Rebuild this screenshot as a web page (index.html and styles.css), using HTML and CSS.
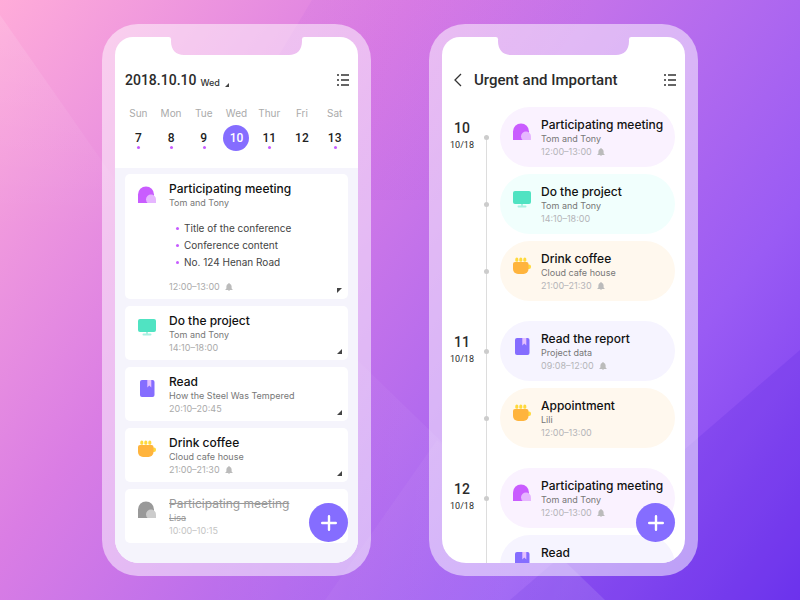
FILE: index.html
```html
<!DOCTYPE html>
<html lang="en">
<head>
<meta charset="utf-8">
<title>Schedule</title>
<link rel="stylesheet" href="styles.css">
</head>
<body>
<svg class="backdrop" viewBox="0 0 800 600" preserveAspectRatio="none" aria-hidden="true">
  <defs>
    <linearGradient id="fade-left" x1="1" y1="0" x2="0" y2="0"><stop offset="0" stop-color="#fff" stop-opacity=".08"/><stop offset="1" stop-color="#fff" stop-opacity="0"/></linearGradient>
    <linearGradient id="fade-down" x1="0" y1="0" x2="0" y2="1"><stop offset="0" stop-color="#fff" stop-opacity=".12"/><stop offset="1" stop-color="#fff" stop-opacity="0"/></linearGradient>
    <linearGradient id="fade-top" x1="0" y1="0" x2="1" y2="0"><stop offset="0" stop-color="#9a3fe0" stop-opacity=".1"/><stop offset="1" stop-color="#9a3fe0" stop-opacity="0"/></linearGradient>
  </defs>
  <path d="M0 15L150 230H0Z" fill="url(#fade-down)"/>
  <path d="M312 0H600L440 200H192Z" fill="url(#fade-top)"/>
  <path d="M800 350L510 600H800Z" fill="#3a0fd8" opacity=".13"/>
  <path d="M355 358L605 600H200Z" fill="url(#fade-left)"/>
  <path d="M437 440L605 600H325Z" fill="#fff" opacity=".04"/>
</svg>

<svg class="sprite" aria-hidden="true">
  <symbol id="meeting" viewBox="0 0 20 20"><path class="tone-a" d="M1 18V9.500a8 8 0 0 1 16 0V18Z"/><path class="tone-b" d="M10.500 18a5 5 0 0 1-1.500-3.500 5 5 0 0 1 10 0V18Z"/></symbol>
  <symbol id="monitor" viewBox="0 0 20 20"><rect x="1" y="2" width="18" height="13" rx="2" fill="#50e3c2"/><path d="M9 15h2v1.500h2.500a1 1 0 0 1 0 2h-7a1 1 0 0 1 0-2H9Z" fill="#a9f1e1"/></symbol>
  <symbol id="book" viewBox="0 0 20 20"><rect x="3" y="2" width="14.500" height="17" rx="2" fill="#856dff"/><path d="M10.300 2h4v7.500l-2-2-2 2Z" fill="#e5c0ff"/></symbol>
  <symbol id="coffee" viewBox="0 0 20 20"><path d="M15 8.500h2a2 2 0 0 1 2 2v.5a2 2 0 0 1-2 2h-2Z" fill="#ffd93b"/><g fill="#ffd93b"><rect x="3.300" y="1.500" width="3" height="4.300" rx="1.500"/><rect x="7.300" y="1.500" width="3" height="4.300" rx="1.500"/><rect x="11.300" y="1.500" width="3" height="4.300" rx="1.500"/></g><path d="M3 6h11.500a2 2 0 0 1 2 2v5a5 5 0 0 1-5 5H6a5 5 0 0 1-5-5V8a2 2 0 0 1 2-2Z" fill="#ffb43d"/></symbol>
  <symbol id="bell" viewBox="0 0 8 8"><path d="M4 0a.7.7 0 0 1 .7.7A2.600 2.600 0 0 1 6.600 3.200V5.500l1 1V7H.4v-.5l1-1V3.200A2.600 2.600 0 0 1 3.300.7.7.7 0 0 1 4 0Z"/><path d="M3 7h2v.6H3Z"/></symbol>
  <symbol id="list" viewBox="0 0 12 12"><path d="M0 1h2M0 6h2M0 11h2M4 1h8M4 6h8M4 11h8" stroke="#333" stroke-width="1.400"/></symbol>
  <symbol id="plus" viewBox="0 0 16 16"><path d="M8 1.200v13.600M1.200 8h13.600" stroke="#fff" stroke-width="2.400" stroke-linecap="round"/></symbol>
  <symbol id="notch" viewBox="0 0 131 18" preserveAspectRatio="none"><path d="M0 0V18H13C5 18 0 13 0 4ZM131 0V18H118C126 18 131 13 131 4Z" fill="#fff"/></symbol>
</svg>

<main class="stage">
  <section class="phone" aria-label="Day view">
    <div class="status"><span class="ear left"></span><svg class="notch"><use href="#notch"/></svg><span class="ear right"></span></div>
    <div class="screen">
      <header class="bar">
        <h1 class="heading numeric">2018.10.10</h1>
        <button class="day-picker">Wed <svg class="corner small" viewBox="0 0 5 5"><path d="M5 0V5H0Z"/></svg></button>
        <button class="menu" aria-label="List"><svg><use href="#list"/></svg></button>
      </header>
      <div class="week">
        <button class="day"><span>Sun</span><b class="dot">7</b></button>
        <button class="day"><span>Mon</span><b class="dot">8</b></button>
        <button class="day"><span>Tue</span><b class="dot">9</b></button>
        <button class="day"><span>Wed</span><b class="today">10</b></button>
        <button class="day"><span>Thur</span><b class="dot">11</b></button>
        <button class="day"><span>Fri</span><b>12</b></button>
        <button class="day"><span>Sat</span><b class="dot">13</b></button>
      </div>
      <div class="agenda">
        <article class="card">
          <svg class="icon"><use href="#meeting"/></svg>
          <div class="info">
            <h2>Participating meeting</h2><p>Tom and Tony</p>
            <ul><li>Title of the conference</li><li>Conference content</li><li>No. 124 Henan Road</li></ul>
            <time>12:00–13:00 <svg class="bell"><use href="#bell"/></svg></time>
          </div>
          <svg class="corner" viewBox="0 0 5 5"><path d="M0 0H5L0 5Z"/></svg>
        </article>
        <article class="card">
          <svg class="icon"><use href="#monitor"/></svg>
          <div class="info"><h2>Do the project</h2><p>Tom and Tony</p><time>14:10–18:00</time></div>
          <svg class="corner" viewBox="0 0 5 5"><path d="M5 0V5H0Z"/></svg>
        </article>
        <article class="card">
          <svg class="icon"><use href="#book"/></svg>
          <div class="info"><h2>Read</h2><p>How the Steel Was Tempered</p><time>20:10–20:45</time></div>
          <svg class="corner" viewBox="0 0 5 5"><path d="M5 0V5H0Z"/></svg>
        </article>
        <article class="card">
          <svg class="icon"><use href="#coffee"/></svg>
          <div class="info"><h2>Drink coffee</h2><p>Cloud cafe house</p><time>21:00–21:30 <svg class="bell"><use href="#bell"/></svg></time></div>
          <svg class="corner" viewBox="0 0 5 5"><path d="M5 0V5H0Z"/></svg>
        </article>
        <article class="card done">
          <svg class="icon"><use href="#meeting"/></svg>
          <div class="info"><h2>Participating meeting</h2><p>Lisa</p><time>10:00–10:15</time></div>
        </article>
      </div>
      <button class="add" aria-label="Add"><svg><use href="#plus"/></svg></button>
    </div>
  </section>

  <section class="phone" aria-label="Urgent and important">
    <div class="status"><span class="ear left"></span><svg class="notch"><use href="#notch"/></svg><span class="ear right"></span></div>
    <div class="screen">
      <header class="bar">
        <button class="back" aria-label="Back"><svg viewBox="0 0 8 14"><path d="M7 1L1 7L7 13" fill="none" stroke="#333" stroke-width="1.300"/></svg></button>
        <h1 class="heading">Urgent and Important</h1>
        <button class="menu" aria-label="List"><svg><use href="#list"/></svg></button>
      </header>
      <div class="timeline">
        <div class="group">
          <div class="row"><div class="date"><b>10</b><span>10/18</span></div><i class="node"></i>
            <article class="pill pink"><svg class="icon"><use href="#meeting"/></svg><div class="info"><h2>Participating meeting</h2><p>Tom and Tony</p><time>12:00–13:00 <svg class="bell"><use href="#bell"/></svg></time></div></article></div>
          <div class="row"><div class="date"></div><i class="node"></i>
            <article class="pill mint"><svg class="icon"><use href="#monitor"/></svg><div class="info"><h2>Do the project</h2><p>Tom and Tony</p><time>14:10–18:00</time></div></article></div>
          <div class="row"><div class="date"></div><i class="node"></i>
            <article class="pill cream"><svg class="icon"><use href="#coffee"/></svg><div class="info"><h2>Drink coffee</h2><p>Cloud cafe house</p><time>21:00–21:30 <svg class="bell"><use href="#bell"/></svg></time></div></article></div>
        </div>
        <div class="group">
          <div class="row"><div class="date"><b>11</b><span>10/18</span></div><i class="node"></i>
            <article class="pill lilac"><svg class="icon"><use href="#book"/></svg><div class="info"><h2>Read the report</h2><p>Project data</p><time>09:08–12:00 <svg class="bell"><use href="#bell"/></svg></time></div></article></div>
          <div class="row"><div class="date"></div><i class="node"></i>
            <article class="pill cream"><svg class="icon"><use href="#coffee"/></svg><div class="info"><h2>Appointment</h2><p>Lili</p><time>12:00–13:00</time></div></article></div>
        </div>
        <div class="group">
          <div class="row"><div class="date"><b>12</b><span>10/18</span></div><i class="node"></i>
            <article class="pill pink"><svg class="icon"><use href="#meeting"/></svg><div class="info"><h2>Participating meeting</h2><p>Tom and Tony</p><time>12:00–13:00 <svg class="bell"><use href="#bell"/></svg></time></div></article></div>
          <div class="row"><div class="date"></div><i class="node"></i>
            <article class="pill lilac"><svg class="icon"><use href="#book"/></svg><div class="info"><h2>Read</h2><p>Tom and Tony</p></div></article></div>
        </div>
      </div>
      <button class="add" aria-label="Add"><svg><use href="#plus"/></svg></button>
    </div>
  </section>
</main>
</body>
</html>
```

FILE: styles.css
```css
* { box-sizing: border-box; margin: 0; padding: 0; }
body {
  min-height: 100vh;
  font-family: Inter, "Noto Sans", sans-serif;
  color: #111;
  background: linear-gradient(127deg, #ffacd9 0%, #da7de4 33%, #b46bee 58%, #9a5bf4 76%, #7338f0 100%);
}
button { border: 0; background: none; font: inherit; color: inherit; }
svg { display: block; flex: none; }
.sprite { position: absolute; width: 0; height: 0; }
.backdrop { position: absolute; inset: 0; width: 100%; height: 100%; z-index: -1; }

.stage {
  height: 100vh;
  min-height: 400px;
  padding: 24px 0;
  display: flex;
  justify-content: center;
  gap: 58px;
}
.phone {
  flex: 0 1 269px;
  min-width: 0;
  display: flex;
  flex-direction: column;
  padding: 13px;
  border-radius: 36px;
  background: rgba(255, 255, 255, .5);
}
.status { display: flex; height: 18px; }
.ear { flex: 1; background: #fff; }
.ear.left { border-radius: 24px 3px 0 0; }
.ear.right { border-radius: 3px 24px 0 0; }
.notch { width: 131px; height: 18px; }
.notch use { clip-path: inset(4px 0 0 0); }
.screen {
  position: relative;
  flex: 1;
  min-height: 0;
  display: flex;
  flex-direction: column;
  overflow: hidden;
  border-radius: 0 0 24px 24px;
  background: #fff;
}

.bar { display: flex; align-items: center; height: 50px; padding: 0 9px 0 10px; }
.heading { font: 500 15px/20px Roboto, sans-serif; color: #2b2b2b; }
.heading.numeric { font-size: 14px; }
.day-picker { display: flex; align-items: flex-end; gap: 5px; margin: 5px 0 0 4px; font-size: 9px; line-height: 10px; font-weight: 500; color: #333; }
.corner { width: 5px; height: 5px; fill: #444; }
.corner.small { width: 4px; height: 4px; margin-bottom: 1px; }
.menu { margin-left: auto; }
.menu svg { width: 12px; height: 12px; }
.back { margin: 0 12px 0 2px; }
.back svg { width: 8px; height: 14px; }

.week { display: grid; grid-template-columns: repeat(7, 1fr); padding: 2px 7px 17px; }
.day { display: flex; flex-direction: column; align-items: center; gap: 5px; }
.day span { font-size: 10px; line-height: 13px; color: #aaa; }
.day b {
  position: relative;
  width: 26px;
  border-radius: 50%;
  font: 500 12px/26px Roboto, sans-serif;
  color: #222;
}
.day .today { background: #856dff; color: #fff; }
.dot::after {
  content: "";
  position: absolute;
  left: 12px;
  bottom: 2px;
  width: 3px;
  height: 3px;
  border-radius: 50%;
  background: #c65cff;
}

.agenda { flex: 1; display: flex; flex-direction: column; gap: 7px; padding: 6px 10px; background: #f5f4fc; }
.card, .pill { display: flex; }
.card { position: relative; gap: 12px; padding: 7px 12px 5px; border-radius: 5px; background: #fff; }
.icon { width: 20px; height: 20px; margin-top: 4px; }
.tone-a { fill: var(--tone-a, #c95cff); }
.tone-b { fill: var(--tone-b, #e6b6ff); }
.info { min-width: 0; white-space: nowrap; }
h2 { font-size: 12px; line-height: 15px; font-weight: 500; }
p { font-size: 9px; line-height: 13px; color: #777; }
time { display: flex; align-items: center; gap: 5px; font-size: 9px; line-height: 14px; color: #aaa; }
.bell { width: 8px; height: 8px; fill: #bbb; }
.card .corner { position: absolute; right: 6px; bottom: 6px; }
ul { list-style: none; padding: 11px 0 9px 7px; }
li { display: flex; align-items: center; gap: 5px; font-size: 10px; line-height: 17px; color: #444; }
li::before { content: ""; width: 3px; height: 3px; border-radius: 50%; background: #c65cff; }
.done { --tone-a: #999; --tone-b: #ccc; }
.done h2, .done p { color: #999; text-decoration: line-through; }
.done h2 { font-weight: 400; }
.done time { color: #c4c4c4; }

.timeline { flex: 1; min-height: 0; padding: 2px 10px 0; background: linear-gradient(#ddd, #ddd) 44px 30px / 1px 100% no-repeat; }
.group { display: flex; flex-direction: column; gap: 7px; margin-bottom: 20px; }
.row { display: flex; align-items: center; }
.date { width: 20px; display: flex; flex-direction: column; align-items: center; gap: 3px; padding-bottom: 5px; color: #2b2b2b; }
.date b { font: 500 14px/18px Roboto, sans-serif; }
.date span { font: 9px/11px Roboto, sans-serif; }
.node { flex: none; width: 5px; height: 5px; margin: 0 11px 0 12px; border-radius: 50%; background: #ccc; }
.pill { flex: 1; min-width: 0; min-height: 60px; gap: 9px; padding: 10px 12px 8px; border-radius: 30px; }
.pill .icon { margin-top: 5px; }
.pink { background: #faf2ff; }
.mint { background: #f1fffd; }
.cream { background: #fff8ee; }
.lilac { background: #f6f4ff; }
.pill time { color: #b4b4b8; }

.add {
  position: absolute;
  right: 10px;
  bottom: 21px;
  width: 39px;
  height: 39px;
  display: grid;
  place-items: center;
  border-radius: 50%;
  background: #856dff;
}
.add svg { width: 16px; height: 16px; }
```
